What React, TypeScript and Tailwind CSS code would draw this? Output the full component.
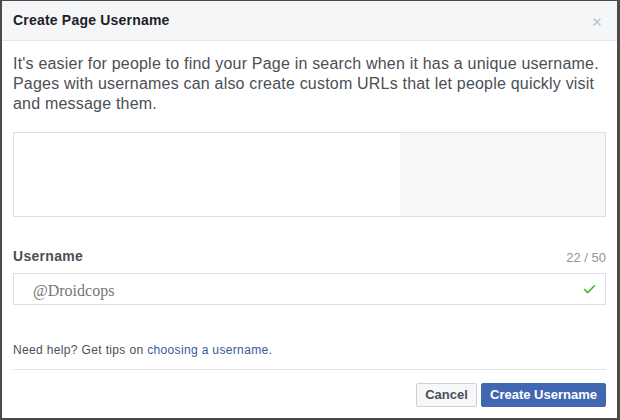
import { X, Check } from 'lucide-react';

export default function App() {
  return (
    <div className="w-[620px] h-[420px] bg-[#4a4a4a] pt-px pl-[2px] pr-[3px] pb-[2px] font-['Liberation_Sans',Arial,sans-serif]">
      <div className="flex flex-col h-full bg-white">
        {/* Header */}
        <div className="flex items-center justify-between h-[40px] px-[11px] bg-[#f5f6f7] border-b border-[#e5e5e5]">
          <h1 className="text-[14px] font-bold text-[#1d2129] tracking-[0.2px]">Create Page Username</h1>
          <X className="w-[12px] h-[12px] mt-[2px] text-[#bec2c9] mr-[3px]" strokeWidth={3} />
        </div>

        {/* Body */}
        <div className="flex flex-col px-[11px]">
          <p className="mt-[13px] text-[16px] leading-[20px] text-[#4b4f56] tracking-[0.2px] whitespace-nowrap">
            It's easier for people to find your Page in search when it has a unique username.
            <br />
            Pages with usernames can also create custom URLs that let people quickly visit
            <br />
            and message them.
          </p>

          <div className="mt-[18px] h-[85px] flex border border-[#dddfe2]">
            <div className="w-[386px] bg-white" />
            <div className="flex-1 bg-[#f7f7f7]" />
          </div>

          <div className="mt-[29px] flex items-end justify-between">
            <span className="text-[14px] font-bold text-[#4b4f56] tracking-[0.3px]">Username</span>
            <span className="text-[13px] text-[#90949c]">22 / 50</span>
          </div>

          <div className="mt-[6px] h-[32px] flex items-center justify-between border border-[#dddfe2] pl-[19px] pr-[8px]">
            <span className="mt-[3px] text-[16px] text-[#777] font-['Liberation_Serif',Georgia,serif]">@Droidcops</span>
            <Check className="w-[15px] h-[15px] text-[#42b72a]" strokeWidth={2.5} />
          </div>

          <p className="mt-[36px] text-[12px] text-[#4b4f56] tracking-[0.35px]">
            Need help? Get tips on <span className="text-[#365899]">choosing a username.</span>
          </p>

          <div className="mt-[10px] border-t border-[#e5e5e5]" />

          <div className="mt-[13px] flex justify-end gap-[4px]">
            <button className="h-[24px] w-[61px] bg-[#f6f7f9] border border-[#ced0d4] rounded-[2px] text-[13px] font-bold text-[#4b4f56]">
              Cancel
            </button>
            <button className="h-[24px] w-[125px] bg-[#4267b2] border border-[#4267b2] rounded-[2px] text-[13px] font-bold text-white">
              Create Username
            </button>
          </div>
        </div>
      </div>
    </div>
  );
}
